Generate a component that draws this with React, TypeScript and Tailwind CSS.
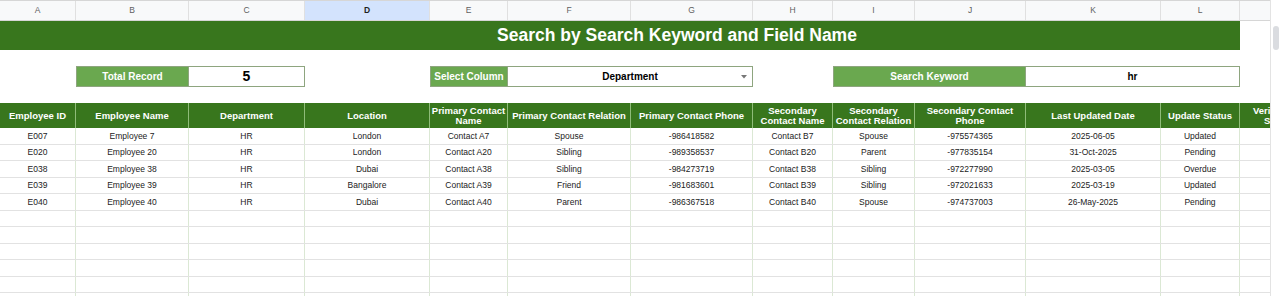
const cols = [
  { l: "A", w: "w-[76px]" },
  { l: "B", w: "w-[113px]" },
  { l: "C", w: "w-[116px]" },
  { l: "D", w: "w-[125px]" },
  { l: "E", w: "w-[78px]" },
  { l: "F", w: "w-[123px]" },
  { l: "G", w: "w-[122px]" },
  { l: "H", w: "w-[80px]" },
  { l: "I", w: "w-[82px]" },
  { l: "J", w: "w-[111px]" },
  { l: "K", w: "w-[135px]" },
  { l: "L", w: "w-[79px]" },
  { l: "M", w: "w-[78px]" },
];

const headers = [
  "Employee ID",
  "Employee Name",
  "Department",
  "Location",
  "Primary Contact Name",
  "Primary Contact Relation",
  "Primary Contact Phone",
  "Secondary Contact Name",
  "Secondary Contact Relation",
  "Secondary Contact Phone",
  "Last Updated Date",
  "Update Status",
  "Verification Status",
];

const rows = [
  ["E007", "Employee 7", "HR", "London", "Contact A7", "Spouse", "-986418582", "Contact B7", "Spouse", "-975574365", "2025-06-05", "Updated", ""],
  ["E020", "Employee 20", "HR", "London", "Contact A20", "Sibling", "-989358537", "Contact B20", "Parent", "-977835154", "31-Oct-2025", "Pending", ""],
  ["E038", "Employee 38", "HR", "Dubai", "Contact A38", "Sibling", "-984273719", "Contact B38", "Sibling", "-972277990", "2025-03-05", "Overdue", ""],
  ["E039", "Employee 39", "HR", "Bangalore", "Contact A39", "Friend", "-981683601", "Contact B39", "Sibling", "-972021633", "2025-03-19", "Updated", ""],
  ["E040", "Employee 40", "HR", "Dubai", "Contact A40", "Parent", "-986367518", "Contact B40", "Spouse", "-974737003", "26-May-2025", "Pending", ""],
];

// alternating row heights, ~16.5px like the sheet
const rowH = ["h-[17px]", "h-[16px]"];

function GridRow({ cells, h }: { cells: string[]; h: string }) {
  return (
    <div className={`flex ${h} border-b border-[#e2e2e2]`}>
      {cols.map((c, i) => (
        <div
          key={c.l}
          className={`${c.w} shrink-0 flex items-center justify-center border-r border-[#dbe8d4] text-[8.5px] text-[#222] whitespace-nowrap`}
        >
          {cells[i]}
        </div>
      ))}
    </div>
  );
}

export default function App() {
  const empty = Array.from({ length: 6 }, () => cols.map(() => ""));

  return (
    <div className="flex bg-white font-['Liberation_Sans',Arial,sans-serif] h-[296px] overflow-hidden">
      <div className="w-[1270px] shrink-0 overflow-hidden">
        {/* column letters */}
        <div className="flex h-[21px] border-t border-b border-[#d6d6d6] bg-[#f8f9fa]">
          {cols.map((c) => (
            <div
              key={c.l}
              className={`${c.w} shrink-0 flex items-center justify-center border-r border-[#e0e0e0] text-[8.5px] ${
                c.l === "D" ? "bg-[#d3e3fd] text-[#1f1f1f] font-bold" : "text-[#5f5f5f]"
              }`}
            >
              {c.l}
            </div>
          ))}
        </div>

        {/* title */}
        <div className="flex">
          <div className="w-[1240px] h-[29px] shrink-0 bg-[#38761d] flex items-center justify-center pl-[114px]">
            <span className="text-white font-bold text-[17.5px] leading-none">
              Search by Search Keyword and Field Name
            </span>
          </div>
        </div>

        <div className="h-[16px]" />

        {/* controls */}
        <div className="flex h-[21px]">
          <div className="w-[76px] shrink-0" />
          <div className="w-[113px] shrink-0 bg-[#6aa84f] border border-[#8ea57f] flex items-center justify-center text-white font-bold text-[10px]">
            Total Record
          </div>
          <div className="w-[116px] shrink-0 border border-l-0 border-[#8ea57f] flex items-center justify-center font-bold text-[14px] text-black">
            5
          </div>
          <div className="w-[125px] shrink-0" />
          <div className="w-[78px] shrink-0 bg-[#6aa84f] border border-[#8ea57f] flex items-center justify-center text-white font-bold text-[10px] whitespace-nowrap">
            Select Column
          </div>
          <div className="w-[245px] shrink-0 border border-l-0 border-[#8ea57f] flex items-center">
            <div className="w-[16px]" />
            <div className="flex-1 text-center font-bold text-[10px] text-black">Department</div>
            <div className="w-[16px] flex items-center justify-center">
              <svg width="6" height="4" viewBox="0 0 6 4">
                <polygon points="0,0 6,0 3,3.5" fill="#777" />
              </svg>
            </div>
          </div>
          <div className="w-[80px] shrink-0" />
          <div className="w-[193px] shrink-0 bg-[#6aa84f] border border-[#8ea57f] flex items-center justify-center text-white font-bold text-[10px]">
            Search Keyword
          </div>
          <div className="w-[214px] shrink-0 border border-l-0 border-[#8ea57f] flex items-center justify-center font-bold text-[10px] text-black">
            hr
          </div>
        </div>

        <div className="h-[16px]" />

        {/* table header */}
        <div className="flex h-[25px] bg-[#38761d]">
          {cols.map((c, i) => (
            <div
              key={c.l}
              className={`${c.w} shrink-0 flex items-center justify-center border-r border-[#8fbc79] px-[1px] text-center text-white font-bold text-[9.5px] leading-[10px]`}
            >
              {headers[i]}
            </div>
          ))}
        </div>

        {rows.map((r, i) => (
          <GridRow key={i} cells={r} h={rowH[i % 2]} />
        ))}
        {empty.map((r, i) => (
          <GridRow key={"e" + i} cells={r} h={rowH[(i + 1) % 2]} />
        ))}
      </div>

      {/* vertical scrollbar */}
      <div className="w-[10px] shrink-0 border-l border-[#e3e3e3] bg-white pt-[26px] flex justify-center">
        <div className="w-[6px] h-[24px] rounded-full bg-[#dadce0]" />
      </div>
    </div>
  );
}
